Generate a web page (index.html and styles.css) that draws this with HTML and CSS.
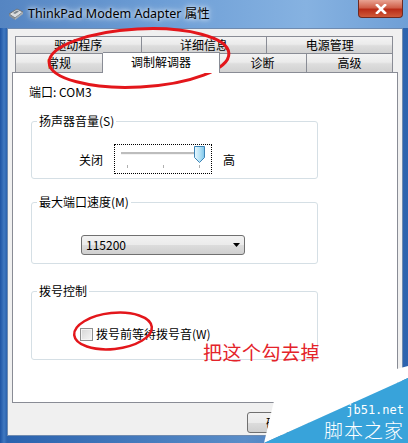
FILE: index.html
```html
<!DOCTYPE html>
<html>
<head>
    <meta charset="UTF-8">
    <meta name="viewport" content="width=device-width, initial-scale=1.0">
    <title>ThinkPad Modem Adapter 属性</title>
    <link rel="stylesheet" href="styles.css">
</head>
<body>
    <div class="window">
        <div class="titlebar">
            <svg class="app-icon" width="16" height="14" viewBox="0 0 16 14">
                <path d="M1 7 L9 2 L15 5 L7 11 Z" fill="#d9dcdf" stroke="#6d7378" stroke-width="1"/>
                <path d="M1 7 L7 11 L7 13 L1 9 Z" fill="#8a9096"/>
                <path d="M7 11 L15 5 L15 7 L7 13 Z" fill="#a7adb2"/>
                <path d="M5 6 L9 3.5 L11 4.5 L7 7 Z" fill="#7d858c"/>
            </svg>
            <span class="title">ThinkPad Modem Adapter 属性</span>
            <div class="close-btn">
                <svg width="12" height="10" viewBox="0 0 12 10">
                    <path d="M2 1 L10 9 M10 1 L2 9" stroke="#fff" stroke-width="2.6" stroke-linecap="square"/>
                </svg>
            </div>
        </div>

        <div class="client">
            <div class="tabs">
                <div class="tab-row row-back">
                    <div class="tab tab-first">驱动程序</div>
                    <div class="tab">详细信息</div>
                    <div class="tab">电源管理</div>
                </div>
                <div class="tab-row row-front">
                    <div class="tab tab-first tab-general">常规</div>
                    <div class="tab tab-active">调制解调器</div>
                    <div class="tab tab-diag">诊断</div>
                    <div class="tab tab-adv">高级</div>
                </div>
            </div>

            <div class="panel">
                <div class="port">端口: COM3</div>

                <div class="group group-volume">
                    <span class="group-title">扬声器音量(S)</span>
                    <div class="slider-row">
                        <span>关闭</span>
                        <div class="slider">
                            <svg width="96" height="28" viewBox="0 0 96 28">
                                <defs>
                                    <linearGradient id="thumb" x1="0" y1="0" x2="1" y2="0">
                                        <stop offset="0" stop-color="#e9f7fd"/>
                                        <stop offset="0.5" stop-color="#b9e4f7"/>
                                        <stop offset="1" stop-color="#7cc5ea"/>
                                    </linearGradient>
                                </defs>
                                <rect x="6" y="7" width="84" height="2" fill="#bdbdbd"/>
                                <rect x="6" y="9" width="84" height="1" fill="#f4f4f4"/>
                                <path d="M12.5 20 v3 M48.5 20 v3 M84.5 20 v3" stroke="#b0b0b0" stroke-width="1"/>
                                <path d="M79.5 1.5 h10 v11 l-5 5 l-5 -5 z" fill="url(#thumb)" stroke="#3d83b5" stroke-width="1"/>
                            </svg>
                        </div>
                        <span>高</span>
                    </div>
                </div>

                <div class="group group-speed">
                    <span class="group-title">最大端口速度(M)</span>
                    <div class="combo">
                        <span>115200</span>
                        <svg width="7" height="4" viewBox="0 0 7 4"><path d="M0 0 H7 L3.5 4 Z" fill="#000"/></svg>
                    </div>
                </div>

                <div class="group group-dial">
                    <span class="group-title">拨号控制</span>
                    <label class="check-row">
                        <span class="checkbox"></span>
                        <span>拨号前等待拨号音(W)</span>
                    </label>
                </div>
            </div>

            <div class="footer">
                <button class="btn">确定</button>
            </div>
        </div>
    </div>

    <svg class="marks" width="408" height="443" viewBox="0 0 408 443">
        <ellipse cx="139" cy="58" rx="90" ry="29" transform="rotate(-3 139 58)" fill="none" stroke="#e3161b" stroke-width="3"/>
        <ellipse cx="113" cy="331" rx="39" ry="18" transform="rotate(-6 113 331)" fill="none" stroke="#e3161b" stroke-width="2.5"/>
    </svg>
    <div class="note">把这个勾去掉</div>

    <div class="watermark">
        <svg width="144" height="77" viewBox="0 0 144 77">
            <polygon points="10,35 144,0 144,12 0,77" fill="#fff"/>
            <polygon points="144,12 144,77 0,77" fill="#38a3da"/>
        </svg>
        <span class="wm-url">jb51.net</span>
        <span class="wm-name">脚本之家</span>
    </div>
</body>
</html>
```

FILE: styles.css
```css
body {
    margin: 0;
    width: 408px;
    height: 443px;
    overflow: hidden;
    font-family: "Noto Sans CJK SC", sans-serif;
    font-size: 12px;
    color: #000;
    background-color: #1f55a4;
}

.window {
    width: 408px;
    height: 443px;
    box-sizing: border-box;
    padding: 0 5px 7px 7px;
    background: linear-gradient(to right, #1d53a3 0px, #3f78c0 4px, #2a62ae 7px, #5a8dc8 60%, #2c63ae 100%);
}

.titlebar {
    height: 28px;
    margin: 0 -5px 0 -7px;
    padding-left: 8px;
    display: flex;
    align-items: center;
    background: linear-gradient(to right, #5585c2, #6d9ed6 40%, #86b2e1 75%, #6f9fd6);
}

.app-icon {
    margin-right: 4px;
}

.title {
    font-family: "Noto Sans", "Noto Sans CJK SC", sans-serif;
    font-size: 12.5px;
    color: #000;
    text-shadow: 0 0 4px #fff, 0 0 8px rgba(255, 255, 255, 0.8);
    margin-top: -3px;
}

.close-btn {
    margin-left: auto;
    margin-right: 5px;
    align-self: flex-start;
    width: 45px;
    height: 18px;
    box-sizing: border-box;
    border: 1px solid #6e2a22;
    border-top: none;
    border-radius: 0 0 4px 4px;
    background: linear-gradient(#e9a392, #d0604a 45%, #b92c17 55%, #cf5a3a);
    display: flex;
    align-items: center;
    justify-content: center;
}

.client {
    height: 408px;
    box-sizing: border-box;
    border: 1px solid #6f8bb0;
    background-color: #f0f0f0;
    padding: 7px 4px 0 4px;
}

.tabs {
    margin-left: 3px;
    width: 378px;
}

.tab-row {
    display: flex;
}

.tab {
    box-sizing: border-box;
    border-top: 1px solid #898c95;
    border-right: 1px solid #898c95;
    background: linear-gradient(#f3f3f3, #ebebeb 45%, #dddddd 55%, #d2d2d2);
    text-align: center;
}

.tab-first {
    border-left: 1px solid #898c95;
}

.row-back {
    height: 17px;
}

.row-back .tab {
    flex: 1;
    height: 17px;
    line-height: 16px;
}

.row-front {
    height: 19px;
    align-items: flex-start;
}

.row-front .tab {
    height: 19px;
    line-height: 18px;
}

.tab-general {
    width: 88px;
}

.tab-diag {
    width: 88px;
}

.tab-adv {
    width: 86px;
}

.tab-active {
    width: 116px;
    margin-top: -1px;
    position: relative;
    z-index: 1;
    border-right: none;
    box-shadow: 1px 0 0 #898c95;
    background: #fff;
}

.row-front .tab-active {
    height: 21px;
    line-height: 18px;
}

.panel {
    height: 331px;
    box-sizing: border-box;
    border: 1px solid #898c95;
    background-color: #fff;
    padding-left: 16px;
}

.port {
    margin-top: 12px;
    line-height: 14px;
}

.group {
    width: 287px;
    box-sizing: border-box;
    margin-left: 2px;
    border: 1px solid #d5dfe5;
    border-radius: 3px;
}

.group-title {
    display: inline-block;
    margin: -8px 0 0 5px;
    padding: 0 2px;
    line-height: 14px;
    background-color: #fff;
    vertical-align: top;
}

.group-volume {
    margin-top: 22px;
    height: 58px;
}

.slider-row {
    display: flex;
    align-items: center;
    gap: 11px;
    margin: 5px 0 0 47px;
}

.slider {
    width: 98px;
    height: 30px;
    box-sizing: border-box;
    border: 1px dotted #000;
}

.slider svg {
    display: block;
}

.group-speed {
    margin-top: 23px;
    height: 62px;
}

.combo {
    width: 164px;
    height: 20px;
    box-sizing: border-box;
    margin: 15px 0 0 49px;
    padding: 0 4px 0 4px;
    border: 1px solid #707070;
    border-radius: 3px;
    background: linear-gradient(#f2f2f2, #ebebeb 50%, #dddddd 50%, #cfcfcf);
    display: flex;
    align-items: center;
    justify-content: space-between;
    line-height: 16px;
}

.group-dial {
    margin-top: 27px;
    height: 69px;
}

.check-row {
    display: flex;
    align-items: center;
    gap: 3px;
    margin: 18px 0 0 48px;
    line-height: 14px;
}

.checkbox {
    width: 13px;
    height: 13px;
    box-sizing: border-box;
    border: 1px solid #8f8f8f;
    background: linear-gradient(135deg, #d6d6d6, #f6f6f6);
    box-shadow: inset 0 0 0 1px #f4f4f4;
}

.footer {
    display: flex;
    padding: 9px 0 0 235px;
}

.btn {
    width: 62px;
    height: 21px;
    font-family: "Noto Sans CJK SC", sans-serif;
    font-size: 12px;
    border: 1px solid #707070;
    border-radius: 3px;
    background: linear-gradient(#f2f2f2, #ebebeb 50%, #dddddd 50%, #cfcfcf);
    padding: 0;
}

.marks {
    position: absolute;
    left: 0;
    top: 0;
    pointer-events: none;
}

.note {
    position: absolute;
    left: 203px;
    top: 340px;
    font-size: 19px;
    line-height: 24px;
    color: #e4232a;
    letter-spacing: 0.5px;
}

.watermark {
    position: absolute;
    left: 264px;
    top: 366px;
    width: 144px;
    height: 77px;
}

.watermark svg {
    display: block;
}

.wm-url {
    position: absolute;
    right: 4px;
    top: 38px;
    font-family: "DejaVu Sans Mono", monospace;
    font-size: 12px;
    line-height: 12px;
    color: #fff;
}

.wm-name {
    position: absolute;
    right: 4px;
    top: 54px;
    font-size: 19px;
    line-height: 19px;
    color: #fff;
    font-weight: 300;
    letter-spacing: 1px;
}
```
